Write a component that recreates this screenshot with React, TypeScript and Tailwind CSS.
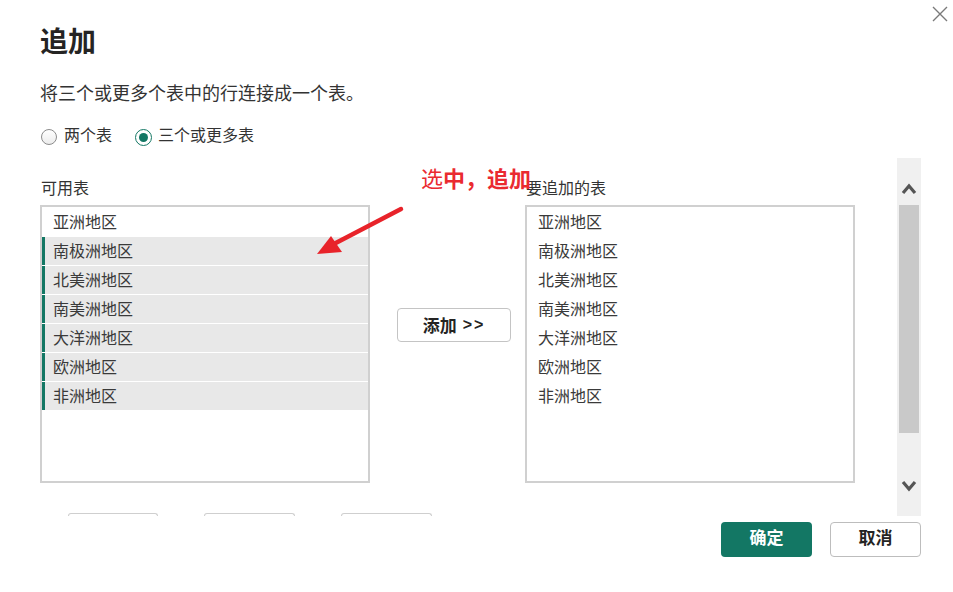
import React from "react";

const regions = ["亚洲地区", "南极洲地区", "北美洲地区", "南美洲地区", "大洋洲地区", "欧洲地区", "非洲地区"];
const selected = new Set([1, 2, 3, 4, 5, 6]);

function Chevron({ up }: { up: boolean }) {
  return (
    <svg width="16" height="13" viewBox="0 0 16 13">
      {up ? (
        <polyline points="2,11 8,4 14,11" fill="none" stroke="#555" strokeWidth="3.2" strokeLinejoin="miter" />
      ) : (
        <polyline points="2,2 8,9 14,2" fill="none" stroke="#555" strokeWidth="3.2" strokeLinejoin="miter" />
      )}
    </svg>
  );
}

export default function App() {
  return (
    <div
      className="relative w-[953px] h-[592px] overflow-hidden bg-white pl-[40px] pr-[5px] pt-[6px] text-[#333]"
      style={{ fontFamily: '"Noto Sans CJK SC", "Noto Sans", sans-serif' }}
    >
      {/* header */}
      <div className="flex justify-between items-start">
        <div className="mt-[16px] text-[28px] leading-[36px] font-bold text-[#252423]">追加</div>
        <svg width="16" height="16" viewBox="0 0 16 16" className="mt-0">
          <path d="M1 1 L15 15 M15 1 L1 15" stroke="#7a7a7a" strokeWidth="1.4" />
        </svg>
      </div>

      <div className="mt-[22px] text-[18px] leading-[24px] text-[#333]">将三个或更多个表中的行连接成一个表。</div>

      {/* radios */}
      <div className="mt-[18px] flex items-start text-[16px] leading-[24px] text-[#333]">
        <div className="ml-[1px] mt-[7px] w-[16px] h-[16px] rounded-full border border-[#8c8c8c] bg-gradient-to-b from-white to-[#ececec]" />
        <span className="ml-[7px]">两个表</span>
        <div className="ml-[23px] mt-[7px] w-[17px] h-[17px] rounded-full border-[1.5px] border-[#137764] bg-white flex items-center justify-center">
          <div className="w-[9px] h-[9px] rounded-full bg-[#137764]" />
        </div>
        <span className="ml-[6px]">三个或更多表</span>
      </div>

      {/* middle */}
      <div className="mt-[12px] flex items-start">
        <div className="w-[815px] pt-[17px] flex flex-col">
          <div className="flex items-start">
            {/* left column */}
            <div className="flex flex-col">
              <div className="text-[16px] leading-[24px] pl-[1px]">可用表</div>
              <div className="mt-[6px] w-[330px] h-[278px] border-2 border-[#d0d0d0] pt-[1px]">
                {regions.map((r, i) =>
                  selected.has(i) ? (
                    <div key={r} className="h-[28px] mb-[1px] bg-[#e8e8e8] border-l-[3px] border-[#137764] pl-[8px] text-[16px] leading-[27px] text-[#3a3a3a]">
                      {r}
                    </div>
                  ) : (
                    <div key={r} className="h-[28px] mb-[1px] pl-[11px] text-[16px] leading-[27px] text-[#3a3a3a]">
                      {r}
                    </div>
                  )
                )}
              </div>
            </div>
            {/* add button */}
            <button className="ml-[27px] mt-[133px] w-[114px] h-[34px] rounded-[4px] border border-[#c4c4c4] bg-white flex items-center justify-center gap-[6px] text-[17px] text-[#252423]">
              <span className="font-bold">添加</span>
              <span className="font-bold tracking-[2px] text-[16px]" style={{ fontFamily: '"Liberation Sans", sans-serif' }}>&gt;&gt;</span>
            </button>
            {/* right column */}
            <div className="ml-[14px] flex flex-col">
              <div className="text-[16px] leading-[24px] pl-[1px]">要追加的表</div>
              <div className="mt-[6px] w-[330px] h-[278px] border-2 border-[#d0d0d0] pt-[1px]">
                {regions.map((r) => (
                  <div key={r} className="h-[28px] mb-[1px] pl-[11px] text-[16px] leading-[27px] text-[#3a3a3a]">
                    {r}
                  </div>
                ))}
              </div>
            </div>
          </div>
          {/* cut-off buttons */}
          <div className="mt-[30px] ml-[28px] flex gap-[46px]">
            <div className="w-[90px] h-[3px] border-t border-x border-[#cfcfcf] rounded-t-[4px]" />
            <div className="w-[91px] h-[3px] border-t border-x border-[#cfcfcf] rounded-t-[4px]" />
            <div className="w-[91px] h-[3px] border-t border-x border-[#cfcfcf] rounded-t-[4px]" />
          </div>
        </div>
        {/* scrollbar */}
        <div className="ml-[42px] w-[24px] h-[358px] bg-[#f0f0f0] flex flex-col items-center pt-[24px] pb-[23px]">
          <Chevron up />
          <div className="mt-[10px] w-[20px] h-[228px] bg-[#c9c9c9]" />
          <div className="flex-1" />
          <Chevron up={false} />
        </div>
      </div>

      {/* footer */}
      <div className="mt-[6px] flex justify-end pr-[27px] gap-[18px]">
        <button className="w-[91px] h-[35px] pb-[5px] rounded-[4px] bg-[#137764] text-white text-[17px] leading-[24px] font-bold">确定</button>
        <button className="w-[91px] h-[35px] pb-[5px] rounded-[4px] border border-[#bdbdbd] bg-white text-[#252423] text-[17px] leading-[24px] font-bold">取消</button>
      </div>

      {/* annotation overlay */}
      <div className="absolute left-[421px] top-[163px] text-[22px] leading-[28px] text-[#ea2a30]">
        <span>选</span>
        <span className="font-bold">中，追加</span>
      </div>
      <svg className="absolute left-[310px] top-[200px]" width="100" height="62" viewBox="310 200 100 62">
        <line x1="401" y1="209" x2="330" y2="246" stroke="#e8232a" strokeWidth="4.5" strokeLinecap="round" />
        <polygon points="317,254 331,236 342,252" fill="#e8232a" />
      </svg>
    </div>
  );
}
